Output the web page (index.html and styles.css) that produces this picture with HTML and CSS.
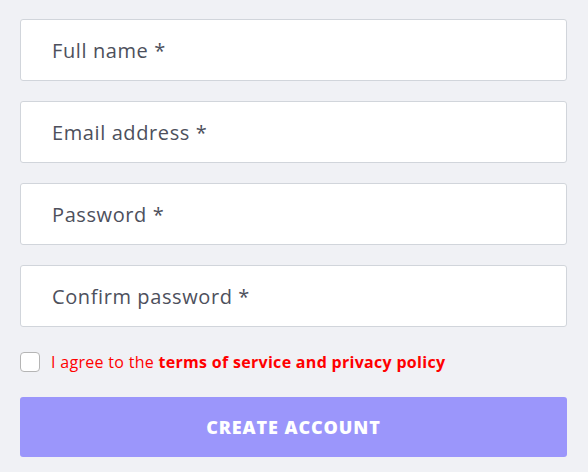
FILE: index.html
```html
<!DOCTYPE html>
<html>
<head>
<meta charset="utf-8">
<link rel="stylesheet" href="styles.css">
</head>
<body>
<form class="form">
  <div class="field">Full name *</div>
  <div class="field">Email address *</div>
  <div class="field">Password *</div>
  <div class="field">Confirm password *</div>
  <label class="agree">
    <span class="box"></span>
    <span class="agree-text">I agree to the <b>terms of service and privacy policy</b></span>
  </label>
  <div class="btn">CREATE ACCOUNT</div>
</form>
</body>
</html>
```
FILE: styles.css
```css
html, body {
  margin: 0;
  padding: 0;
  background: #f0f1f5;
}
body {
  font-family: "Open Sans", "DejaVu Sans", sans-serif;
}
.form {
  padding: 19px 21px 0 20px;
  display: flex;
  flex-direction: column;
}
.field {
  height: 60px;
  border: 1px solid #d1d5db;
  border-radius: 3px;
  background: #fff;
  margin-bottom: 20px;
  display: flex;
  align-items: center;
  padding-left: 31px;
  font-size: 20px;
  letter-spacing: 0.6px;
  color: #4d505c;
}
.agree {
  display: flex;
  align-items: center;
  margin-top: 4px;
  height: 22px;
}
.box {
  width: 18px;
  height: 18px;
  border: 1px solid #b5b5b5;
  border-radius: 4px;
  background: #fff;
  margin-right: 11px;
}
.agree-text {
  font-size: 16px;
  letter-spacing: 0.3px;
  color: #ff0000;
}
.agree-text b {
  font-weight: 700;
}
.btn {
  margin-top: 24px;
  height: 60px;
  background: #9b96fb;
  border-radius: 3px;
  color: #fff;
  font-weight: 800;
  font-size: 18px;
  letter-spacing: 0.9px;
  display: flex;
  align-items: center;
  justify-content: center;
}
```
